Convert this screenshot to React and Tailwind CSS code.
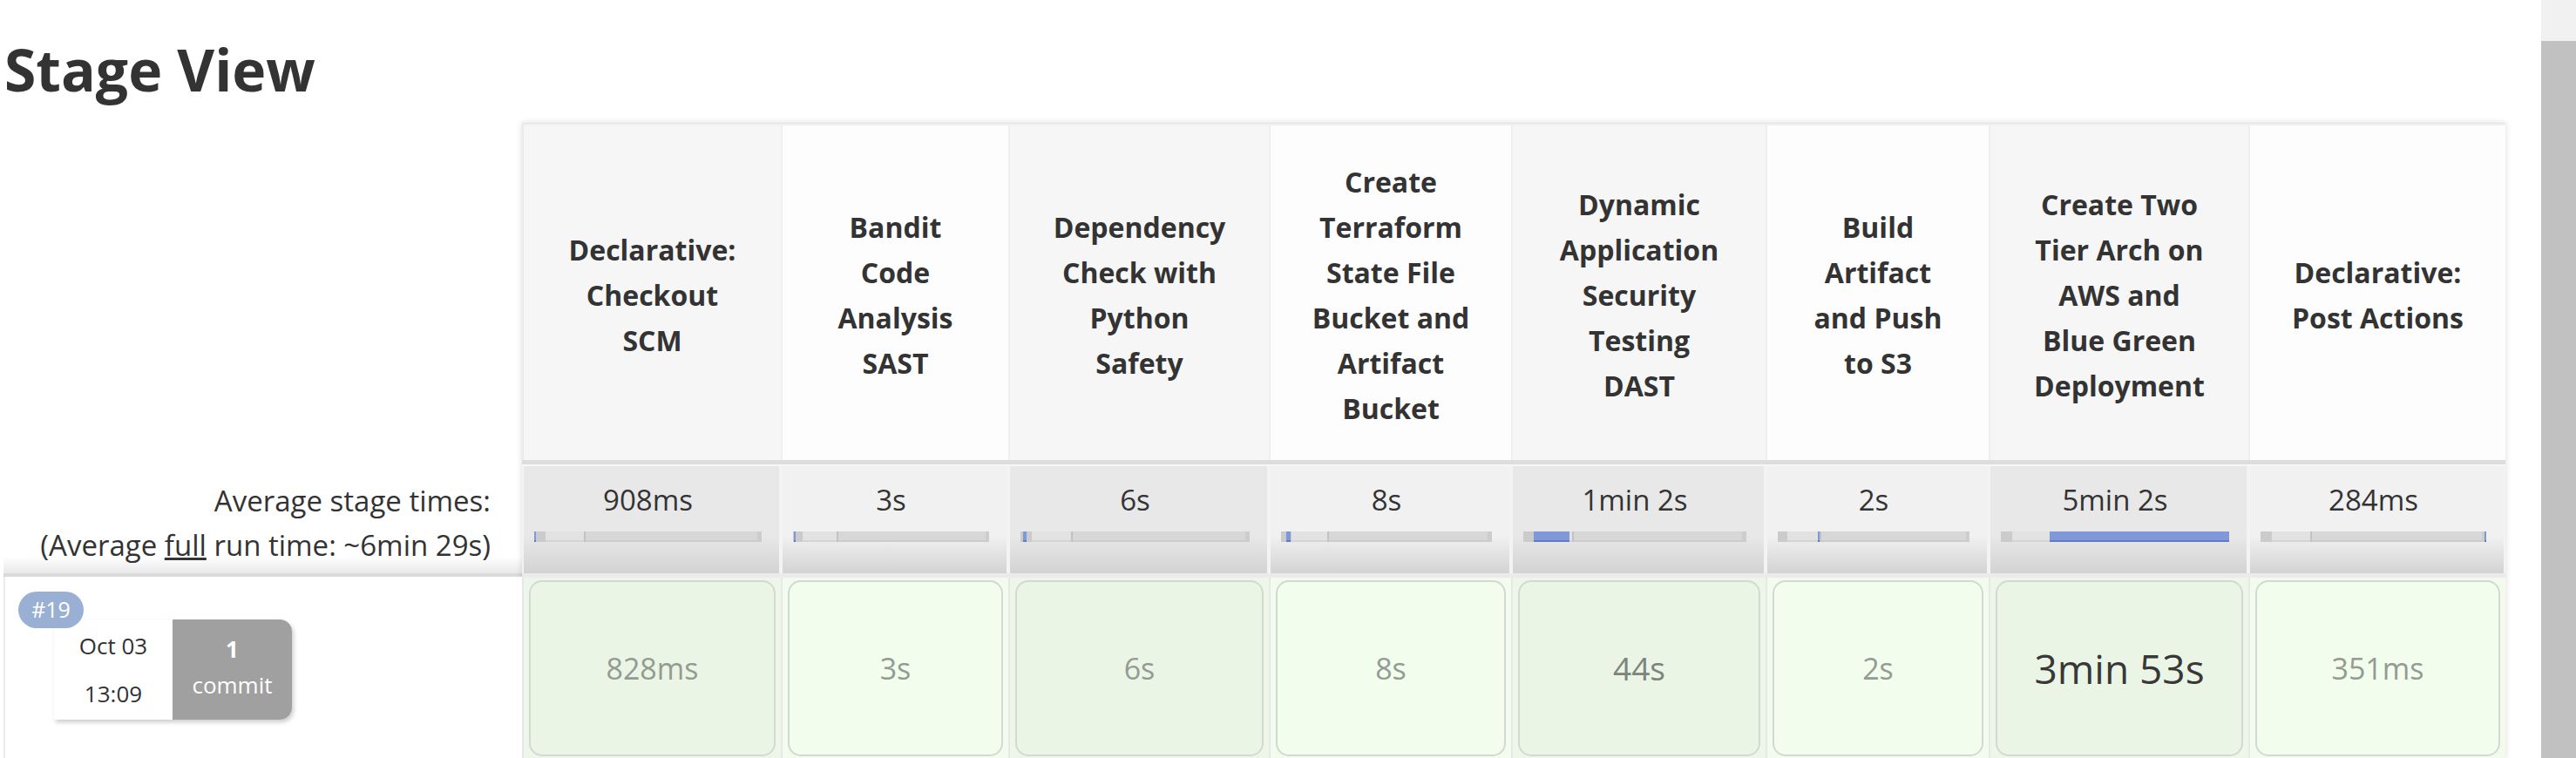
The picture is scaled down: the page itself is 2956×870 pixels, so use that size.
import React from "react";

const stages = [
	{ lines: ["Declarative:", "Checkout", "SCM"], avg: "908ms", sec: 0.908, run: "828ms", w: "w-[297px]", odd: true },
	{ lines: ["Bandit", "Code", "Analysis", "SAST"], avg: "3s", sec: 3, run: "3s", w: "w-[261px]", odd: false },
	{ lines: ["Dependency", "Check with", "Python", "Safety"], avg: "6s", sec: 6, run: "6s", w: "w-[299px]", odd: true },
	{ lines: ["Create", "Terraform", "State File", "Bucket and", "Artifact", "Bucket"], avg: "8s", sec: 8, run: "8s", w: "w-[278px]", odd: false },
	{ lines: ["Dynamic", "Application", "Security", "Testing", "DAST"], avg: "1min 2s", sec: 62, run: "44s", w: "w-[292px]", odd: true, runCls: "text-[37px] text-[#7c857c]" },
	{ lines: ["Build", "Artifact", "and Push", "to S3"], avg: "2s", sec: 2, run: "2s", w: "w-[256px]", odd: false },
	{ lines: ["Create Two", "Tier Arch on", "AWS and", "Blue Green", "Deployment"], avg: "5min 2s", sec: 302, run: "3min 53s", w: "w-[298px]", odd: true, runCls: "text-[46px] text-[#383838]" },
	{ lines: ["Declarative:", "Post Actions"], avg: "284ms", sec: 0.284, run: "351ms", w: "w-[295px]", odd: false },
];

const TOTAL = stages.reduce((s, st) => s + st.sec, 0);

// start offset of each stage, used for the blue part of the bar
let acc = 0;
stages.forEach((st) => {
	st.offset = acc;
	acc += st.sec;
});

const Bar = ({ offset, sec }) => {
	const left = (offset / TOTAL) * 100;
	const width = (sec / TOTAL) * 100;
	return (
		<div className="relative flex h-[12px] w-full bg-[#d7d7d7] shadow-[inset_0_-2px_0_#cccccc]">
			<div className="w-[5%] bg-[#cbcbcb]" />
			<div className="w-[17%] bg-[#e2e2e2] shadow-[inset_0_-2px_0_#d4d4d4]" />
			<div className="w-[2px] bg-[#c2c2c2]" />
			<div className="flex-1" />
			<div className="w-[2%] bg-[#cdcdcd]" />
			<div
				className="absolute top-0 h-full min-w-[2px] bg-[#8097d8] border-b-2 border-[#6279c6]"
				style={{ left: `${Math.min(left, 99.3)}%`, width: `${width}%` }}
			/>
		</div>
	);
};

const App = () => {
	return (
		<div className="flex h-[870px] w-[2956px] overflow-hidden bg-white font-['Open_Sans',sans-serif] text-[#333]">
			<div className="flex-1 flex flex-col">
				<div className="h-[141px] pl-[5px] pt-[46px]">
					<h1 className="text-[66px] font-bold leading-none">Stage View</h1>
				</div>

				<div className="flex">
					{/* left labels */}
					<div className="w-[599px] flex flex-col">
						<div className="h-[387px]" />
						<div className="h-[134px] ml-[4px] pt-[21px] pr-[36px] text-right text-[33px] leading-[51px] bg-linear-to-b from-white from-85% to-[#e9e9e9] border-b-4 border-[#dadada]">
							<div>Average stage times:</div>
							<div>
								(Average <span className="underline">full</span> run time: ~6min 29s)
							</div>
						</div>
						<div className="relative h-[208px] ml-[4px] border-l-2 border-[#ececec] bg-white">
							<div className="absolute left-[56px] top-[49px] flex h-[115px] shadow-[2px_3px_5px_rgba(0,0,0,0.2)] rounded-r-[14px]">
								<div className="w-[136px] bg-white flex flex-col items-center text-[26px] leading-[55px] pt-[3px]">
									<span>Oct 03</span>
									<span>13:09</span>
								</div>
								<div className="w-[137px] bg-[#a0a0a0] rounded-r-[14px] flex flex-col items-center text-white text-[26px] leading-[41px] pt-[14px]">
									<span className="font-bold">1</span>
									<span>commit</span>
								</div>
							</div>
							<div className="absolute left-[15px] top-[17px] h-[42px] w-[75px] rounded-full bg-[#9aafd4] flex items-center justify-center text-white text-[25px]">
								#19
							</div>
						</div>
					</div>

					{/* stage table */}
					<div className="flex flex-col w-[2276px] shadow-[0_0_7px_rgba(0,0,0,0.14)]">
						<div className="flex h-[387px] border-t border-[#e1e6eb]">
							{stages.map((st, i) => (
								<div
									key={i}
									className={`${st.w} flex items-center justify-center pt-[6px] text-center text-[32px] font-bold leading-[52px] border-t-2 border-[#f0f0f0] ${i === 0 ? "border-l-2 border-l-[#e6ebf0]" : "border-l-2 border-l-[#efefef]"} ${st.odd ? "bg-[#f6f6f6]" : "bg-[#fdfdfd]"}`}
								>
									<div>
										{st.lines.map((l) => (
											<div key={l}>{l}</div>
										))}
									</div>
								</div>
							))}
						</div>

						<div className="flex h-[130px] bg-[#f3f3f3]">
							{stages.map((st, i) => (
								<div key={i} className={`${st.w} flex flex-col`}>
									<div className="h-[5px] bg-[#dddddd]" />
									<div className="h-[2px] bg-[#f7f7f7]" />
									<div
										className={`h-[123px] mx-[2px] flex flex-col items-center pt-[19px] pl-[12px] pr-[20px] bg-linear-to-b ${st.odd ? "from-[#e8e8e8]" : "from-[#f1f1f1]"} from-65% to-[#d3d3d3]`}
									>
										<div className="text-[33px] leading-[40px]">{st.avg}</div>
										<div className="mt-[16px] w-full">
											<Bar offset={st.offset} sec={st.sec} />
										</div>
									</div>
								</div>
							))}
						</div>

						<div className="h-[5px] bg-[#ebebeb]" />

						<div className="flex h-[207px]">
							{stages.map((st, i) => (
								<div
									key={i}
									className={`${st.w} pt-[3px] pb-[2px] px-[6px] border-l-2 ${i === 0 ? "border-[#e4e8ec]" : "border-[#e6eae6]"} ${st.odd ? "bg-[#eef6ea]" : "bg-[#f3fbef]"}`}
								>
									<div
										className={`h-full rounded-[15px] border-2 border-[#d2d9d2] flex items-center justify-center ${st.odd ? "bg-[#ebf5e5]" : "bg-[#f2fdee]"} ${st.runCls || "text-[34px] text-[#939b93]"}`}
									>
										{st.run}
									</div>
								</div>
							))}
						</div>
					</div>
				</div>
			</div>

			{/* scrollbar */}
			<div className="w-[40px] flex flex-col bg-[#f1f1f1]">
				<div className="h-[47px]" />
				<div className="flex-1 bg-[#c1c1c1]" />
			</div>
		</div>
	);
};

export default App;
